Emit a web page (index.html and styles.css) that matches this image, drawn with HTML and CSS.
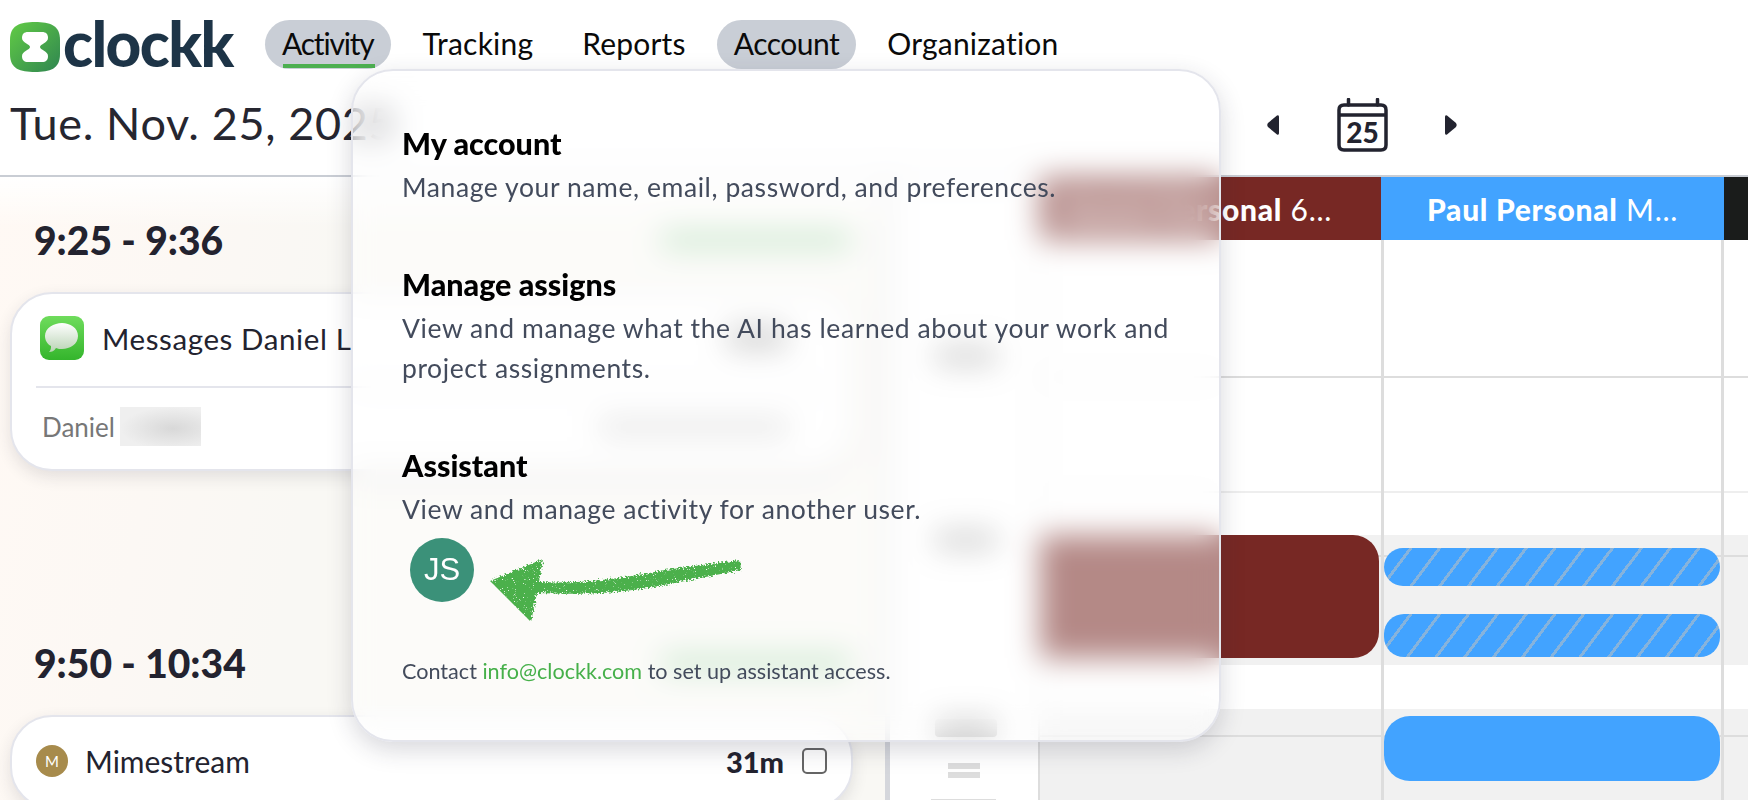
FILE: index.html
```html
<!DOCTYPE html>
<html lang="en">
<head>
<meta charset="utf-8">
<title>Clockk</title>
<link rel="stylesheet" href="styles.css">
</head>
<body>
<div class="app">
  <header class="topbar">
    <div class="logo">
      <svg class="logo-mark" viewBox="0 0 50 50" aria-hidden="true">
        <defs>
          <linearGradient id="lg" x1="0" y1="0" x2="1" y2="1">
            <stop offset="0" stop-color="#62cc45"/>
            <stop offset="1" stop-color="#2f8550"/>
          </linearGradient>
        </defs>
        <path fill="url(#lg)" d="M25 0C40 0 50 3 50 18V32C50 47 40 50 25 50C10 50 0 47 0 32V18C0 3 10 0 25 0Z"/>
        <path fill="#fff" d="M18 10H32C36 10 38 12 38 16C38 21 30 22 30 25C30 28 38 29 38 34C38 38 36 40 32 40H18C14 40 12 38 12 34C12 29 20 28 20 25C20 22 12 21 12 16C12 12 14 10 18 10Z"/>
      </svg>
      <span class="logo-word">clockk</span>
    </div>
    <nav class="nav">
      <a class="nav-item is-pill is-current">Activity</a>
      <a class="nav-item">Tracking</a>
      <a class="nav-item">Reports</a>
      <a class="nav-item is-pill is-tight">Account</a>
      <a class="nav-item">Organization</a>
    </nav>
  </header>

  <div class="daterow">
    <h1 class="date">Tue. Nov. 25, 2025</h1>
    <div class="pager">
      <svg class="arrow" viewBox="0 0 13 22" aria-hidden="true"><path d="M11 1.5 L2 9 Q0.5 11 2 13 L11 20.5 Q13 21.5 13 19 V3 Q13 0.5 11 1.5Z"/></svg>
      <svg class="calicon" viewBox="0 0 54 54" aria-hidden="true">
        <path class="cal-line" d="M4 17V47Q4 52 9 52H46Q51 52 51 47V12Q51 7 46 7H9Q4 7 4 12V17H51"/>
        <path class="cal-line" d="M13.500 1.500V7M42.500 1.500V7"/>
        <text class="cal-num" x="27.500" y="45" text-anchor="middle">25</text>
      </svg>
      <svg class="arrow" viewBox="0 0 13 22" aria-hidden="true"><path d="M2 1.500 L11 9 Q12.500 11 11 13 L2 20.500 Q0 21.500 0 19 V3 Q0 0.500 2 1.500Z"/></svg>
    </div>
  </div>

  <main class="board">
    <section class="activity">
      <div class="group">
        <div class="group-head">
          <h2 class="span">9:25 - 9:36</h2>
          <span class="tag"></span>
        </div>
        <article class="card card-one">
          <div class="card-head">
            <svg class="app-icon" viewBox="0 0 44 44" aria-hidden="true">
              <defs>
                <linearGradient id="mg" x1="0" y1="0" x2="0" y2="1">
                  <stop offset="0" stop-color="#6fdc5c"/>
                  <stop offset="1" stop-color="#34b52c"/>
                </linearGradient>
                <linearGradient id="bb" x1="0" y1="0" x2="0" y2="1">
                  <stop offset="0" stop-color="#fff"/>
                  <stop offset="1" stop-color="#b9d3b4"/>
                </linearGradient>
              </defs>
              <rect width="44" height="44" rx="9" fill="url(#mg)"/>
              <path fill="url(#bb)" d="M22 7C30 7 38 12 38 20C38 28 30 33 22 33C20 33 18 33 16 32C14 35 12 36 9 36C11 34 11 32 11 30C7 28 5 24 5 20C5 12 14 7 22 7Z"/>
            </svg>
            <span class="app-name">Messages Daniel L</span>
            <span class="spacer"></span>
            <span class="dur-hidden"></span>
          </div>
          <div class="card-foot">
            <span class="person">Daniel</span>
            <span class="redact"></span>
            <span class="spacer"></span>
            <span class="note"></span>
          </div>
        </article>
      </div>
      <div class="group">
        <div class="group-head">
          <h2 class="span">9:50 - 10:34</h2>
          <span class="tag"></span>
        </div>
        <article class="card">
          <div class="card-head">
            <span class="app-dot">M</span>
            <span class="app-name name-plain">Mimestream</span>
            <span class="spacer"></span>
            <span class="dur">31m</span>
            <span class="check"></span>
          </div>
        </article>
      </div>
    </section>

    <section class="rail">
      <span class="rail-mark rail-a"></span>
      <span class="rail-mark rail-b"></span>
      <span class="rail-mark rail-c"></span>
      <span class="grip"></span>
      <span class="rail-cap"></span>
    </section>

    <section class="calendar">
      <div class="band band-a"></div>
      <div class="band band-b"></div>
      <div class="rule rule-a"></div>
      <div class="rule rule-b"></div>
      <div class="rule rule-c"></div>
      <div class="rule rule-d"></div>
      <div class="col col-maroon">
        <div class="col-head"><strong>Daniel Personal</strong>&nbsp;<span>6...</span></div>
        <div class="event event-maroon"></div>
      </div>
      <div class="col col-blue">
        <div class="col-head"><strong>Paul Personal</strong>&nbsp;<span>M...</span></div>
        <div class="event event-blue hatch ev-1"></div>
        <div class="event event-blue hatch ev-2"></div>
        <div class="event event-blue ev-3"></div>
      </div>
      <div class="col col-black">
        <div class="col-head"></div>
      </div>
    </section>
  </main>

  <aside class="popover">
    <div class="menu-item">
      <h3 class="menu-title">My account</h3>
      <p class="menu-text">Manage your name, email, password, and preferences.</p>
    </div>
    <div class="menu-item">
      <h3 class="menu-title">Manage assigns</h3>
      <p class="menu-text">View and manage what the AI has learned about your work and project assignments.</p>
    </div>
    <div class="menu-item">
      <h3 class="menu-title">Assistant</h3>
      <p class="menu-text">View and manage activity for another user.</p>
      <div class="avatar">JS</div>
      <p class="contact">Contact <a class="contact-link">info@clockk.com</a> to set up assistant access.</p>
    </div>
    <svg class="scribble" viewBox="0 0 260 70" aria-hidden="true">
      <defs>
        <filter id="chalk" x="-10%" y="-20%" width="120%" height="140%">
          <feTurbulence type="fractalNoise" baseFrequency="0.6" numOctaves="2" seed="4" result="n"/>
          <feDisplacementMap in="SourceGraphic" in2="n" scale="6" result="d"/>
          <feTurbulence type="fractalNoise" baseFrequency="0.9" numOctaves="1" seed="9"/>
          <feColorMatrix type="matrix" values="0 0 0 0 0  0 0 0 0 0  0 0 0 0 0  10 0 0 0 -2.4" result="m"/>
          <feComposite in="d" in2="m" operator="in"/>
        </filter>
      </defs>
      <g filter="url(#chalk)" fill="#4cb04c">
        <path d="M0 26 L53 4 L49 27 C90 29 130 24 175 15 L250 5 L251 15 L180 29 C130 39 90 40 47 38 L41 67 Z"/>
      </g>
    </svg>
  </aside>
</div>
</body>
</html>
```
FILE: styles.css
```css
* { box-sizing: border-box; }
html, body { margin: 0; padding: 0; background: #fff; }
body { font-family: "Lato", "Liberation Sans", sans-serif; color: #23232f; }
h1, h2, h3, p { margin: 0; }

.app { position: relative; width: 1748px; height: 800px; overflow: hidden; display: flex; flex-direction: column; background: #fff; }

/* top bar */
.topbar { display: flex; align-items: flex-start; height: 72px; padding: 20px 0 0 10px; flex: none; }
.logo { display: flex; align-items: center; width: 255px; height: 50px; margin-top: 2px; }
.logo-mark { width: 50px; height: 50px; flex: none; }
.logo-word { margin: -8px 0 0 3px; font-size: 62px; line-height: 74px; font-weight: 900; letter-spacing: -1.6px; color: #1d3447; }
.nav { display: flex; gap: 15px; }
.nav-item { position: relative; height: 49px; padding: 0 17px 4px; display: flex; align-items: center; font-size: 30px; letter-spacing: .2px; color: #0a0a0a; border-radius: 25px; }
.is-pill { background: #c9ced6; }
.is-tight { margin: 0 -1px; letter-spacing: -.5px; }
.is-current { letter-spacing: -1.2px; }
.is-current::after { content: ""; position: absolute; left: 18px; right: 16px; bottom: 1px; height: 4px; background: #4caf50; }

/* date row */
.daterow { display: flex; align-items: center; justify-content: space-between; height: 105px; padding: 3px 290px 0 10px; flex: none; border-bottom: 2px solid #c9cdd4; }
.date { margin-top: -5px; font-size: 45px; font-weight: 400; color: #262630; letter-spacing: .65px; white-space: nowrap; }
.pager { display: flex; align-items: center; gap: 56px; }
.arrow { width: 13px; height: 22px; fill: #22232f; }
.calicon { width: 54px; height: 54px; }
.cal-line { fill: none; stroke: #22232f; stroke-width: 3.500; stroke-linecap: round; stroke-linejoin: round; }
.cal-num { font-family: "Lato", sans-serif; font-weight: 900; font-size: 28px; fill: #22232f; }

/* board */
.board { display: flex; flex: 1; min-height: 0; }
.activity { width: 885px; flex: none; padding: 41px 32px 0 10px; background: linear-gradient(180deg, #fff 0, rgba(255,255,255,0) 50px), linear-gradient(100deg, #fff9f4 0, #fcf8f4 20%, #f9f8f4 36%); }
.group + .group { margin-top: 170px; }
.group-head { display: flex; align-items: center; justify-content: space-between; height: 44px; padding: 0 0 0 24px; margin-bottom: 30px; }
.span { font-size: 39px; line-height: 44px; font-weight: 900; color: #23232f; }
.tag { width: 190px; height: 18px; margin-right: 2px; background: #a8d8ae; border-radius: 6px; }

.card { background: #fff; border: 2px solid #e4e5ec; border-radius: 42px; box-shadow: 0 6px 16px rgba(40, 40, 60, .12); padding: 22px 24px 24px 28px; }
.card-one { height: 179px; }
.card-head { display: flex; align-items: center; height: 44px; }
.app-icon { width: 44px; height: 44px; flex: none; margin-right: 18px; }
.app-name { font-size: 29.500px; color: #23232f; letter-spacing: .6px; white-space: nowrap; }
.name-plain { letter-spacing: 0; font-size: 30px; }
.spacer { flex: 1; }
.dur { font-size: 29px; font-weight: 900; color: #23232f; }
.dur-hidden { width: 60px; height: 22px; margin-right: 40px; background: #aaa; border-radius: 4px; }
.check { width: 25px; height: 26px; margin-left: 18px; border: 2px solid #666; border-radius: 5px; background: #fff; }
.card-foot { display: flex; align-items: center; height: 79px; margin: 26px 0 0 -4px; border-top: 2px solid #e4e5ec; padding-left: 6px; }
.person { font-size: 26px; color: #777; }
.redact { width: 81px; height: 39px; margin-left: 5px; background: radial-gradient(ellipse at 65% 55%, #d8d8d8 0, #efefef 70%); }
.note { width: 190px; height: 14px; margin-right: 38px; background: #c8c8c8; }
.app-dot { width: 32px; height: 32px; margin: 0 17px 0 -4px; flex: none; display: flex; align-items: center; justify-content: center; border-radius: 50%; background: #a78b4c; color: #fff; font-size: 15px; }

/* rail with time marks */
.rail { position: relative; width: 155px; flex: none; background: #fff; border-left: 5px solid #d5d7dc; border-right: 2px solid #ddd; }
.rail-mark { position: absolute; left: 45px; width: 62px; height: 18px; background: #a9a9a9; border-radius: 4px; }
.rail-a { top: 170px; }
.rail-b { top: 354px; }
.rail-c { top: 542px; }
.grip { position: absolute; left: 58px; top: 586px; width: 32px; height: 15px; border-top: 6px solid #ddd; border-bottom: 6px solid #ddd; }
.rail-cap { position: absolute; left: 41px; top: 622px; width: 65px; height: 3px; background: #ddd; }

/* calendar */
.calendar { position: relative; flex: 1; display: flex; min-width: 0; }
.band { position: absolute; left: 0; right: 0; background: #f1f1f1; }
.band-a { top: 358px; height: 130px; }
.band-b { top: 532px; bottom: 0; }
.rule { position: absolute; left: 0; right: 0; height: 2px; background: #ddd; }
.rule-a { top: 199px; }
.rule-b { top: 314px; background: #eee; }
.rule-c { top: 378px; }
.rule-d { top: 558px; }
.col { position: relative; flex: none; height: 100%; }
.col-maroon { width: 341px; }
.col-blue { width: 343px; border-right: 3px solid #ddd; border-left: 3px solid #ddd; }
.col-black { flex: 1; }
.col-head { display: flex; align-items: center; justify-content: center; height: 63px; color: #fff; font-size: 30px; letter-spacing: .7px; white-space: nowrap; }
.col-head strong { font-weight: 900; }
.col-maroon .col-head { justify-content: flex-end; background: #772824; padding-right: 49px; }
.col-blue .col-head { background: #42a3ff; margin: 0 -3px; }
.col-black .col-head { background: #1a1c1b; }
.event { position: absolute; }
.event-maroon { left: 0; right: 2px; top: 358px; height: 123px; background: #772824; border-radius: 0 26px 26px 0; }
.event-blue { left: 0; right: 1px; background: #42a3ff; border-radius: 20px; }
.hatch { background-image: repeating-linear-gradient(127deg, #42a3ff 0, #42a3ff 20px, #86b3dc 20px, #86b3dc 23px); }
.ev-1 { top: 371px; height: 38px; }
.ev-2 { top: 437px; height: 43px; }
.ev-3 { top: 539px; height: 65px; border-radius: 26px; }

/* popover */
.popover { position: absolute; left: 351px; top: 69px; width: 870px; height: 673px; padding: 54px 40px 0 49px; background: rgba(255, 255, 255, .45); -webkit-backdrop-filter: blur(15px); backdrop-filter: blur(15px); border: 2px solid #e4e5ec; border-radius: 42px; box-shadow: 0 8px 24px rgba(40, 40, 60, .18); }
.menu-item { margin-bottom: 59px; }
.menu-item:last-of-type { margin-bottom: 0; }
.menu-title { font-size: 30.500px; line-height: 36px; font-weight: 900; color: #000; }
.menu-text { margin-top: 6px; font-size: 26.500px; line-height: 40px; color: #434b5c; letter-spacing: .58px; }
.avatar { width: 64px; height: 64px; margin: 9px 0 0 8px; display: flex; align-items: center; justify-content: center; border-radius: 50%; background: #3b9179; color: #fff; font-family: "Liberation Sans", sans-serif; font-size: 31px; }
.contact { margin-top: 55px; font-size: 21.600px; line-height: 28px; color: #434b5c; }
.contact-link { color: #46b04a; }
.scribble { position: absolute; left: 137px; top: 484px; width: 260px; height: 70px; }
```
